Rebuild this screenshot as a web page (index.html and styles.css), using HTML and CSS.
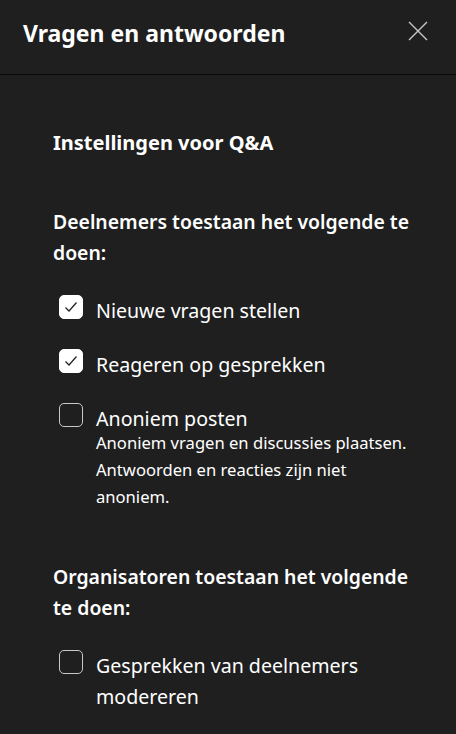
FILE: index.html
```html
<!DOCTYPE html>
<html lang="nl">
<head>
    <meta charset="UTF-8">
    <title>Vragen en antwoorden</title>
    <link rel="stylesheet" href="styles.css">
</head>
<body>
    <div class="panel">
        <div class="header">
            <h1>Vragen en antwoorden</h1>
            <button class="close-button" aria-label="Sluiten">
                <svg width="20" height="20" viewBox="0 0 20 20">
                    <path d="M1 1 L19 19 M19 1 L1 19" stroke="#c8c8c8" stroke-width="1.4" fill="none"/>
                </svg>
            </button>
        </div>

        <div class="content">
            <h2 class="settings-title">Instellingen voor Q&amp;A</h2>

            <h3 class="group-title">Deelnemers toestaan het volgende te doen:</h3>

            <label class="option">
                <span class="box checked">
                    <svg width="16" height="16" viewBox="0 0 16 16"><path d="M2.5 8.5 L6 12 L13.5 3.5" stroke="#1f1f1f" stroke-width="1.2" fill="none"/></svg>
                </span>
                <span class="option-text">Nieuwe vragen stellen</span>
            </label>

            <label class="option">
                <span class="box checked">
                    <svg width="16" height="16" viewBox="0 0 16 16"><path d="M2.5 8.5 L6 12 L13.5 3.5" stroke="#1f1f1f" stroke-width="1.2" fill="none"/></svg>
                </span>
                <span class="option-text">Reageren op gesprekken</span>
            </label>

            <label class="option">
                <span class="box"></span>
                <span class="option-text">
                    Anoniem posten
                    <span class="option-desc">Anoniem vragen en discussies plaatsen. Antwoorden en reacties zijn niet anoniem.</span>
                </span>
            </label>

            <h3 class="group-title organizers">Organisatoren toestaan het volgende te doen:</h3>

            <label class="option">
                <span class="box"></span>
                <span class="option-text">Gesprekken van deelnemers modereren</span>
            </label>
        </div>
    </div>
</body>
</html>
```

FILE: styles.css
```css
body {
    font-family: "Noto Sans", "Open Sans", sans-serif;
    background-color: #1f1f1f;
    color: white;
    margin: 0;
    padding: 0;
}
.panel {
    width: 456px;
    height: 734px;
    overflow: hidden;
}
.header {
    display: flex;
    align-items: flex-start;
    justify-content: space-between;
    height: 58px;
    padding: 16px 28px 0 23px;
    border-bottom: 1px solid #0b0b0b;
}
.header h1 {
    margin: 0;
    font-size: 23px;
    line-height: 34px;
    font-weight: 700;
}
.close-button {
    background: none;
    border: none;
    padding: 0;
    margin-top: 5px;
    width: 20px;
    height: 20px;
    cursor: pointer;
}
.content {
    padding: 54px 38px 0 53px;
}
.settings-title {
    margin: 0;
    font-size: 20px;
    line-height: 28px;
    font-weight: 700;
}
.group-title {
    margin: 49px 0 27px;
    font-size: 19.4px;
    line-height: 31px;
    font-weight: 600;
}
.group-title.organizers {
    margin-top: 51px;
    margin-bottom: 27px;
}
.option {
    display: flex;
    align-items: flex-start;
    gap: 13px;
    margin: 0 0 23px 6px;
    font-size: 19.6px;
    line-height: 31px;
    cursor: pointer;
}
.box {
    flex-shrink: 0;
    display: flex;
    align-items: center;
    justify-content: center;
    width: 24px;
    height: 24px;
    margin-top: 0;
    border: 1px solid #c8c8c8;
    border-radius: 5px;
    box-sizing: border-box;
}
.box.checked {
    background-color: #fff;
    border-color: #fff;
}
.option-desc {
    display: block;
    margin-top: -5px;
    font-size: 16.6px;
    line-height: 27px;
}
```
